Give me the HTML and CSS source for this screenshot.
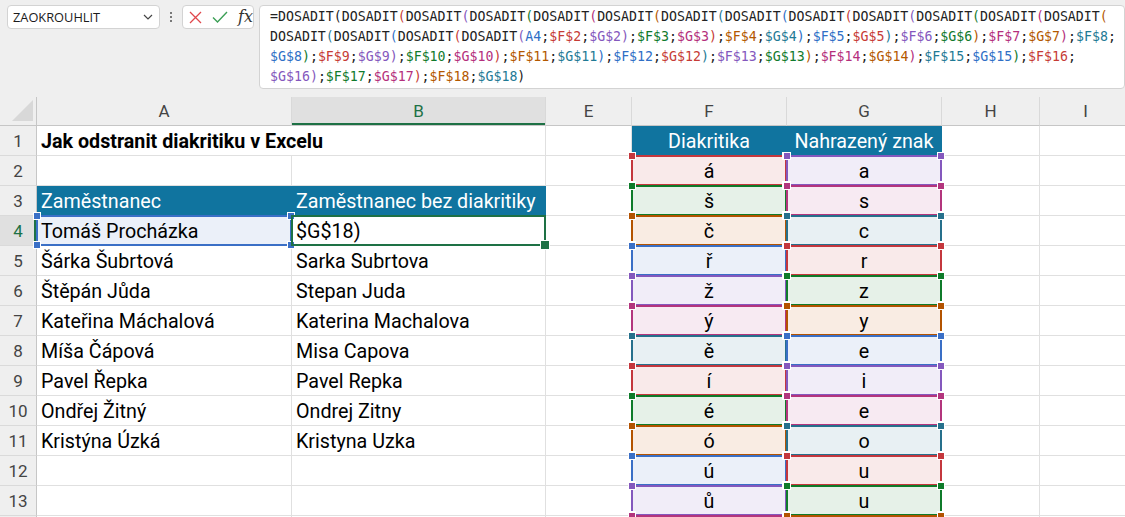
FILE: index.html
```html
<!DOCTYPE html>
<html lang="cs">
<head>
<meta charset="utf-8">
<title>Jak odstranit diakritiku v Excelu</title>
<link rel="stylesheet" href="styles.css">
</head>
<body>
<div class="toolbar">
  <div class="namebox"><span>ZAOKROUHLIT</span><svg class="chev" width="10" height="6" viewBox="0 0 10 6"><path d="M1 1l4 4 4-4" fill="none" stroke="#444" stroke-width="1.2"/></svg></div>
  <div class="kebab"><i></i><i></i><i></i></div>
  <div class="fxbox">
    <svg class="ic-x" width="13" height="13" viewBox="0 0 13 13"><path d="M1 1L12 12M12 1L1 12" fill="none" stroke="#e0474c" stroke-width="1.3"/></svg>
    <svg class="ic-ok" width="16" height="12" viewBox="0 0 16 12"><path d="M1 6.5l4.5 4.5L15 1" fill="none" stroke="#3c9f56" stroke-width="1.4"/></svg>
    <span class="fx">fx</span>
  </div>
  <div class="formula">
<div class="fl">=DOSADIT<span class="kb">(</span>DOSADIT<span class="k1">(</span>DOSADIT<span class="k2">(</span>DOSADIT<span class="k3">(</span>DOSADIT<span class="k4">(</span>DOSADIT<span class="k5">(</span>DOSADIT<span class="k6">(</span>DOSADIT<span class="k0">(</span>DOSADIT<span class="k1">(</span>DOSADIT<span class="k2">(</span>DOSADIT<span class="k3">(</span>DOSADIT<span class="k4">(</span>DOSADIT<span class="k5">(</span></div>
<div class="fl">DOSADIT<span class="k6">(</span>DOSADIT<span class="k0">(</span>DOSADIT<span class="k1">(</span>DOSADIT<span class="k2">(</span><span class="k0">A4</span>;<span class="k1">$F$2</span>;<span class="k2">$G$2</span><span class="k2">)</span>;<span class="k3">$F$3</span>;<span class="k4">$G$3</span><span class="k1">)</span>;<span class="k5">$F$4</span>;<span class="k6">$G$4</span><span class="k0">)</span>;<span class="k0">$F$5</span>;<span class="k1">$G$5</span><span class="k6">)</span>;<span class="k2">$F$6</span>;<span class="k3">$G$6</span><span class="k5">)</span>;<span class="k4">$F$7</span>;<span class="k5">$G$7</span><span class="k4">)</span>;<span class="k6">$F$8</span>;</div>
<div class="fl"><span class="k0">$G$8</span><span class="k3">)</span>;<span class="k1">$F$9</span>;<span class="k2">$G$9</span><span class="k2">)</span>;<span class="k3">$F$10</span>;<span class="k4">$G$10</span><span class="k1">)</span>;<span class="k5">$F$11</span>;<span class="k6">$G$11</span><span class="k0">)</span>;<span class="k0">$F$12</span>;<span class="k1">$G$12</span><span class="k6">)</span>;<span class="k2">$F$13</span>;<span class="k3">$G$13</span><span class="k5">)</span>;<span class="k4">$F$14</span>;<span class="k5">$G$14</span><span class="k4">)</span>;<span class="k6">$F$15</span>;<span class="k0">$G$15</span><span class="k3">)</span>;<span class="k1">$F$16</span>;</div>
<div class="fl"><span class="k2">$G$16</span><span class="k2">)</span>;<span class="k3">$F$17</span>;<span class="k4">$G$17</span><span class="k1">)</span>;<span class="k5">$F$18</span>;<span class="k6">$G$18</span>)</div>
  </div>
</div>

<div class="sheet">
  <!-- column headers -->
  <div class="corner"><svg width="36" height="28" viewBox="0 0 36 28"><polygon points="33,3 33,24 12,24" fill="#d8d8d8"/></svg></div>
  <div class="ch">A</div>
  <div class="ch sel">B</div>
  <div class="ch">E</div>
  <div class="ch">F</div>
  <div class="ch">G</div>
  <div class="ch">H</div>
  <div class="ch">I</div>

  <!-- row 1 -->
  <div class="rh">1</div>
  <div class="c title span2">Jak odstranit diakritiku v Excelu</div>
  <div class="c"></div>
  <div class="c band ctr">Diakritika</div>
  <div class="c band ctr">Nahrazený znak</div>
  <div class="c"></div>
  <div class="c"></div>

  <!-- row 2 -->
  <div class="rh">2</div>
  <div class="c"></div>
  <div class="c"></div>
  <div class="c"></div>
  <div class="c ref r1 ctr">á</div>
  <div class="c ref r2 ctr">a</div>
  <div class="c"></div>
  <div class="c"></div>

  <!-- row 3 -->
  <div class="rh">3</div>
  <div class="c band">Zaměstnanec</div>
  <div class="c band">Zaměstnanec bez diakritiky</div>
  <div class="c"></div>
  <div class="c ref r3 ctr">š</div>
  <div class="c ref r4 ctr">s</div>
  <div class="c"></div>
  <div class="c"></div>

  <!-- row 4 -->
  <div class="rh rsel">4</div>
  <div class="c ref r0">Tomáš Procházka</div>
  <div class="c active">$G$18)</div>
  <div class="c"></div>
  <div class="c ref r5 ctr">č</div>
  <div class="c ref r6 ctr">c</div>
  <div class="c"></div>
  <div class="c"></div>

  <!-- row 5 -->
  <div class="rh">5</div>
  <div class="c">Šárka Šubrtová</div>
  <div class="c">Sarka Subrtova</div>
  <div class="c"></div>
  <div class="c ref r0 ctr">ř</div>
  <div class="c ref r1 ctr">r</div>
  <div class="c"></div>
  <div class="c"></div>

  <!-- row 6 -->
  <div class="rh">6</div>
  <div class="c">Štěpán Jůda</div>
  <div class="c">Stepan Juda</div>
  <div class="c"></div>
  <div class="c ref r2 ctr">ž</div>
  <div class="c ref r3 ctr">z</div>
  <div class="c"></div>
  <div class="c"></div>

  <!-- row 7 -->
  <div class="rh">7</div>
  <div class="c">Kateřina Máchalová</div>
  <div class="c">Katerina Machalova</div>
  <div class="c"></div>
  <div class="c ref r4 ctr">ý</div>
  <div class="c ref r5 ctr">y</div>
  <div class="c"></div>
  <div class="c"></div>

  <!-- row 8 -->
  <div class="rh">8</div>
  <div class="c">Míša Čápová</div>
  <div class="c">Misa Capova</div>
  <div class="c"></div>
  <div class="c ref r6 ctr">ě</div>
  <div class="c ref r0 ctr">e</div>
  <div class="c"></div>
  <div class="c"></div>

  <!-- row 9 -->
  <div class="rh">9</div>
  <div class="c">Pavel Řepka</div>
  <div class="c">Pavel Repka</div>
  <div class="c"></div>
  <div class="c ref r1 ctr">í</div>
  <div class="c ref r2 ctr">i</div>
  <div class="c"></div>
  <div class="c"></div>

  <!-- row 10 -->
  <div class="rh">10</div>
  <div class="c">Ondřej Žitný</div>
  <div class="c">Ondrej Zitny</div>
  <div class="c"></div>
  <div class="c ref r3 ctr">é</div>
  <div class="c ref r4 ctr">e</div>
  <div class="c"></div>
  <div class="c"></div>

  <!-- row 11 -->
  <div class="rh">11</div>
  <div class="c">Kristýna Úzká</div>
  <div class="c">Kristyna Uzka</div>
  <div class="c"></div>
  <div class="c ref r5 ctr">ó</div>
  <div class="c ref r6 ctr">o</div>
  <div class="c"></div>
  <div class="c"></div>

  <!-- row 12 -->
  <div class="rh">12</div>
  <div class="c"></div>
  <div class="c"></div>
  <div class="c"></div>
  <div class="c ref r0 ctr">ú</div>
  <div class="c ref r1 ctr">u</div>
  <div class="c"></div>
  <div class="c"></div>

  <!-- row 13 -->
  <div class="rh">13</div>
  <div class="c"></div>
  <div class="c"></div>
  <div class="c"></div>
  <div class="c ref r2 ctr">ů</div>
  <div class="c ref r3 ctr">u</div>
  <div class="c"></div>
  <div class="c"></div>

  <!-- row 14 (only its top edge is in view) -->
  <div class="rh"></div>
  <div class="c"></div>
  <div class="c"></div>
  <div class="c"></div>
  <div class="c ref r4"></div>
  <div class="c ref r5"></div>
  <div class="c"></div>
  <div class="c"></div>
</div>
</body>
</html>
```

FILE: styles.css
```css
* { box-sizing: border-box; margin: 0; padding: 0; }
html, body { width: 1125px; height: 517px; overflow: hidden; background: #fff; }
body { font-family: Roboto, "Liberation Sans", sans-serif; color: #000; }

/* ---------- toolbar / formula bar ---------- */
.toolbar {
  height: 97px;
  background: #efefef;
  display: flex;
  align-items: flex-start;
  padding: 5px 0 0 7px;
}
.namebox {
  width: 153px;
  height: 24px;
  background: #fff;
  border: 1px solid #d3d3d3;
  border-radius: 4px;
  display: flex;
  align-items: center;
  justify-content: space-between;
  padding: 0 6px 0 5px;
  font: 12.8px "Open Sans", "Noto Sans", sans-serif;
  color: #1b1b1b;
}
.chev { display: block; }
.kebab {
  width: 22px;
  height: 24px;
  display: flex;
  flex-direction: column;
  align-items: center;
  justify-content: center;
  gap: 2px;
}
.kebab i { display: block; width: 2px; height: 2px; background: #505050; border-radius: 1px; }
.fxbox {
  width: 72px;
  height: 24px;
  background: #fff;
  border: 1px solid #d3d3d3;
  border-radius: 4px;
  display: flex;
  align-items: center;
  padding-left: 6px;
}
.ic-x { display: block; }
.ic-ok { display: block; margin-left: 10px; }
.fx {
  margin-left: 10px;
  font: italic 16px "DejaVu Serif", "Liberation Serif", serif;
  color: #333;
  line-height: 20px;
}
.formula {
  margin-left: 5px;
  flex: 1;
  height: 84px;
  background: #fff;
  border: 1px solid #d3d3d3;
  border-radius: 4px;
  padding: 1px 0 0 10px;
  font-family: "DejaVu Sans Mono", "Liberation Mono", monospace;
  font-size: 13.25px;
  line-height: 20px;
  color: #222;
}
.fl { white-space: pre; }
.kb { color: #222; }

/* reference palette */
.k0 { color: #2f6fc6; }
.k1 { color: #c63b35; }
.k2 { color: #8458bd; }
.k3 { color: #117a2c; }
.k4 { color: #b42f7c; }
.k5 { color: #b35800; }
.k6 { color: #1f7a95; }

/* ---------- sheet ---------- */
.sheet {
  display: grid;
  grid-template-columns: 37px 255px 254px 86px 155px 155px 98px 92px;
  grid-template-rows: 29px;
  grid-auto-rows: 30px;
  height: 420px;
  overflow: hidden;
  font-size: 19.7px;
}
.corner {
  background: #efefef;
  border-right: 1px solid #c6c6c6;
  border-bottom: 1px solid #c6c6c6;
}
.corner svg { display: block; }
.ch {
  background: #efefef;
  border-right: 1px solid #d9d9d9;
  border-bottom: 1px solid #c6c6c6;
  text-align: center;
  font-size: 17px;
  line-height: 29px;
  color: #444;
}
.ch.sel {
  background: #e0e0e0;
  color: #1e7145;
  box-shadow: inset 0 -2px 0 #1e7145;
}
.rh {
  background: #efefef;
  border-right: 1px solid #c6c6c6;
  border-bottom: 1px solid #dadada;
  text-align: center;
  font-size: 17px;
  line-height: 29px;
  padding-top: 1px;
  color: #444;
}
.rh.rsel {
  background: #e0e0e0;
  color: #1e7145;
  box-shadow: inset -2px 0 0 #1e7145;
}
.c {
  border-right: 1px solid #e0e0e0;
  border-bottom: 1px solid #e0e0e0;
  padding: 1px 4px 0;
  line-height: 29px;
  white-space: nowrap;
}
.span2 { grid-column: span 2; }
.title { font-weight: 700; }
.ctr { text-align: center; }
.band {
  background: #10749f;
  border-color: #10749f;
  color: #fff;
}

/* active cell */
.active { position: relative; }
.active::before {
  content: "";
  position: absolute;
  left: -1px; top: -1px; right: -1px; bottom: -1px;
  border: 2px solid #1e7145;
}
.active::after {
  content: "";
  position: absolute;
  right: -5px; bottom: -5px;
  width: 8px; height: 8px;
  background: #1e7145;
  border: 1px solid #fff;
}

/* formula reference highlights */
.ref { position: relative; background: var(--f); }
.ref::before {
  content: "";
  position: absolute;
  left: -1px; top: -1px; right: -1px; bottom: -1px;
  border: 2px solid var(--c);
}
.ref::after {
  content: "";
  position: absolute;
  left: -4px; top: -4px; right: -4px; bottom: -4px;
  background:
    linear-gradient(var(--c), var(--c)) left 1px top 1px / 6px 6px no-repeat,
    linear-gradient(var(--c), var(--c)) right 1px top 1px / 6px 6px no-repeat,
    linear-gradient(var(--c), var(--c)) left 1px bottom 1px / 6px 6px no-repeat,
    linear-gradient(var(--c), var(--c)) right 1px bottom 1px / 6px 6px no-repeat,
    linear-gradient(#fff, #fff) left top / 8px 8px no-repeat,
    linear-gradient(#fff, #fff) right top / 8px 8px no-repeat,
    linear-gradient(#fff, #fff) left bottom / 8px 8px no-repeat,
    linear-gradient(#fff, #fff) right bottom / 8px 8px no-repeat;
}
.r0 { --c: #3a6fc6; --f: #ebf0f9; }
.r1 { --c: #c4373d; --f: #f9eaea; }
.r2 { --c: #8458bd; --f: #f1edf8; }
.r3 { --c: #0f7b2a; --f: #e6f1e8; }
.r4 { --c: #b3357d; --f: #f7eaf2; }
.r5 { --c: #b35300; --f: #f9ece3; }
.r6 { --c: #26708c; --f: #e8f0f3; }
```
